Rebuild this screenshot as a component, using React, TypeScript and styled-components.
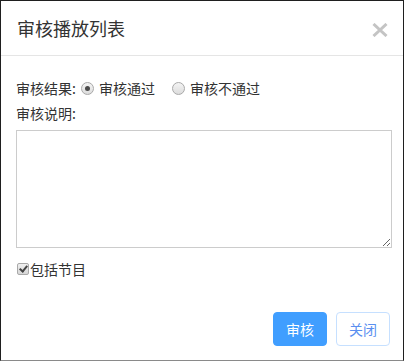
import React, { useState } from 'react';
import styled, { createGlobalStyle } from 'styled-components';

const GlobalStyle = createGlobalStyle`
  body {
    margin: 0;
    background: #fff;
    font-family: "Microsoft YaHei", "Noto Sans CJK SC", "Liberation Sans", sans-serif;
  }
`;

const Modal = styled.div`
  box-sizing: border-box;
  width: 404px;
  height: 361px;
  border: 1px solid #1f1f1f;
  border-bottom-color: #8a8a8a;
  background: #fff;
  display: flex;
  flex-direction: column;
`;

const Header = styled.div`
  height: 54px;
  display: flex;
  align-items: center;
  justify-content: space-between;
  padding: 0 14px 0 16px;
  border-bottom: 1px solid #e5e5e5;
`;

const Title = styled.h4`
  margin: 0;
  font-size: 18px;
  font-weight: normal;
  color: #333;
`;

const Close = styled.button`
  border: 0;
  background: none;
  padding: 0;
  width: 18px;
  height: 18px;
  margin-top: 4px;
  display: flex;
  align-items: center;
  justify-content: center;
  cursor: pointer;
`;

const Body = styled.div`
  padding: 22px 12px 0 15px;
  display: flex;
  flex-direction: column;
  color: #333;
  font-size: 14px;
`;

const Row = styled.div<{ $gap?: number }>`
  display: flex;
  align-items: center;
  height: 20px;
  margin-top: ${p => p.$gap ?? 0}px;
`;

const Label = styled.span`
  margin-right: 4px;
`;

const Radio = styled.label`
  display: inline-flex;
  align-items: center;
  margin-right: 16px;
  input {
    appearance: none;
    box-sizing: border-box;
    margin: 0 5px 0 1px;
    width: 13px;
    height: 13px;
    border-radius: 50%;
    border: 1px solid #a9a9a9;
    background: linear-gradient(#f4f4f4, #dcdcdc);
    position: relative;
  }
  input:checked::after {
    content: '';
    position: absolute;
    left: 3px;
    top: 3px;
    width: 5px;
    height: 5px;
    border-radius: 50%;
    background: #4a4a4a;
  }
`;

const Note = styled.textarea`
  box-sizing: border-box;
  margin-top: 7px;
  width: 376px;
  height: 118px;
  border: 1px solid #ccc;
  resize: vertical;
  font: inherit;
`;

const Check = styled.label`
  display: inline-flex;
  align-items: center;
  input {
    appearance: none;
    box-sizing: border-box;
    margin: 0 1px 0 1px;
    width: 12px;
    height: 12px;
    border-radius: 2px;
    border: 1px solid #a9a9a9;
    background: linear-gradient(#f0f0f0, #d6d6d6);
    position: relative;
  }
  input:checked::after {
    content: '';
    position: absolute;
    left: 3px;
    top: 0px;
    width: 3px;
    height: 6px;
    border: solid #444;
    border-width: 0 2px 2px 0;
    transform: rotate(40deg);
  }
`;

const Footer = styled.div`
  display: flex;
  justify-content: flex-end;
  gap: 9px;
  padding: 33px 13px 0 0;
`;

const Button = styled.button<{ $primary?: boolean }>`
  width: 54px;
  height: 34px;
  border-radius: 4px;
  font-family: inherit;
  font-size: 14px;
  cursor: pointer;
  border: 1px solid ${p => (p.$primary ? '#409eff' : '#c6e0ff')};
  background: ${p => (p.$primary ? '#409eff' : '#fff')};
  color: ${p => (p.$primary ? '#fff' : '#5a8ff0')};
`;

export default function App() {
  const [pass, setPass] = useState(true);
  const [withItems, setWithItems] = useState(true);
  return (
    <>
      <GlobalStyle />
      <Modal>
        <Header>
          <Title>审核播放列表</Title>
          <Close aria-label="关闭">
            <svg width="16" height="14" viewBox="0 0 16 14">
              <path d="M1.5 1 L14.5 13 M14.5 1 L1.5 13" stroke="#c4c4c4" strokeWidth="3" />
            </svg>
          </Close>
        </Header>
        <Body>
          <Row>
            <Label>审核结果:</Label>
            <Radio>
              <input type="radio" name="r" checked={pass} onChange={() => setPass(true)} />
              审核通过
            </Radio>
            <Radio>
              <input type="radio" name="r" checked={!pass} onChange={() => setPass(false)} />
              审核不通过
            </Radio>
          </Row>
          <Row $gap={5}>审核说明:</Row>
          <Note />
          <Row $gap={11}>
            <Check>
              <input type="checkbox" checked={withItems} onChange={e => setWithItems(e.target.checked)} />
              包括节目
            </Check>
          </Row>
        </Body>
        <Footer>
          <Button $primary>审核</Button>
          <Button>关闭</Button>
        </Footer>
      </Modal>
    </>
  );
}
